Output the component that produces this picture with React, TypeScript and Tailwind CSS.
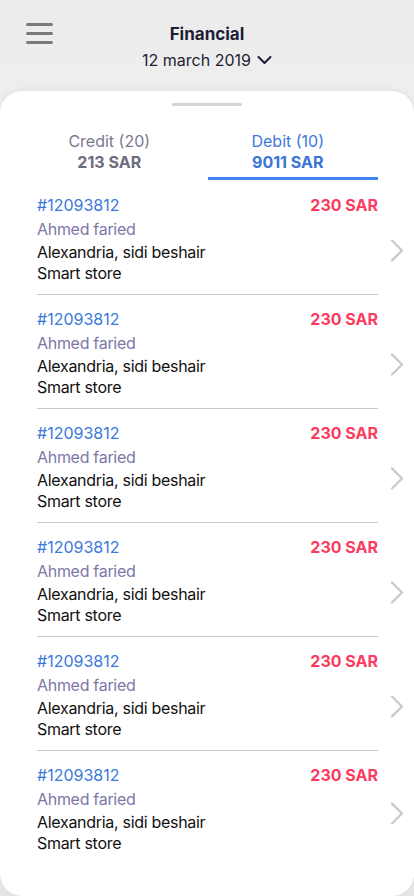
import React from "react";

const items = Array.from({ length: 6 }, (_, i) => ({
  id: i,
  code: "#12093812",
  amount: "230 SAR",
  name: "Ahmed faried",
  address: "Alexandria, sidi beshair",
  store: "Smart store",
}));

const App: React.FC = () => {
  return (
    <div
      className="flex flex-col h-[896px] w-full overflow-hidden bg-gradient-to-b from-[#ececec] via-[#f6f6f6] to-[#e6e6e6]"
      style={{ fontFamily: "Inter, 'Noto Sans', sans-serif" }}
    >
      {/* header */}
      <div className="flex h-[91px] shrink-0 items-start justify-between">
        <div className="w-[80px] pl-[26px] pt-[23px]">
          <div className="flex w-[27px] flex-col gap-[6px]">
            <span className="h-[3px] w-full rounded-full bg-[#7a7a7a]" />
            <span className="h-[3px] w-full rounded-full bg-[#7a7a7a]" />
            <span className="h-[3px] w-full rounded-full bg-[#7a7a7a]" />
          </div>
        </div>
        <div className="flex flex-col items-center pt-[24px]">
          <h1 className="text-[17px] leading-[20px] font-bold text-[#1d1d35]">Financial</h1>
          <div className="mt-[5px] flex items-center gap-[6px] text-[16px] leading-[22px] text-[#1d1d35]">
            <span>12 march 2019</span>
            <svg width="15" height="10" viewBox="0 0 15 10" fill="none">
              <path d="M1.5 2 L7.5 8 L13.5 2" stroke="#1d1d35" strokeWidth="2" strokeLinecap="round" strokeLinejoin="round" />
            </svg>
          </div>
        </div>
        <div className="w-[80px]" />
      </div>

      {/* card */}
      <div className="flex-1 rounded-[22px] bg-white shadow-[0_-1px_6px_rgba(0,0,0,0.06)] pt-3">
        <div className="mx-auto h-[3px] w-[70px] rounded-full bg-[#d4d4d4]" />

        <div className="ml-[37px] mt-[25px] grid w-[341px] grid-cols-2">
          <div className="pr-[26px] text-center">
            <div className="text-[16px] leading-[20px] text-[#7a7a8e]">Credit (20)</div>
            <div className="mt-[1px] text-[16px] leading-[20px] font-bold text-[#6c6c7c]">213 SAR</div>
          </div>
          <div className="flex flex-col items-center">
            <div className="pr-[10px] text-[16px] leading-[20px] text-[#3b78dc]">Debit (10)</div>
            <div className="mt-[1px] pr-[10px] text-[16px] leading-[20px] font-bold text-[#3a74d6]">9011 SAR</div>
            <div className="mt-[5px] h-[3px] w-full bg-[#3f84f4]" />
          </div>
        </div>

        <div className="pt-[13px]">
          {items.map((it, idx) => (
            <div key={it.id} className="flex">
              <div className="ml-[37px] w-[341px]">
                <div className="pb-[11px]">
                  <div className="flex items-center justify-between leading-[24px]">
                    <span className="text-[16px] text-[#3b78dc]">{it.code}</span>
                    <span className="text-[16px] font-bold text-[#fb3b60]">{it.amount}</span>
                  </div>
                  <div className="text-[16px] leading-[24px] tracking-[-0.3px] text-[#7d77a9]">{it.name}</div>
                  <div className="text-[16px] leading-[22px] tracking-[-0.3px] text-[#111]">{it.address}</div>
                  <div className="text-[16px] leading-[20px] tracking-[-0.3px] text-[#111]">{it.store}</div>
                </div>
                {idx < items.length - 1 && <div className="h-px w-full bg-[#c8c6d0]" />}
                {idx < items.length - 1 && <div className="h-3" />}
              </div>
              <div className="flex flex-1 items-center justify-center pl-[2px]">
                <svg width="14" height="23" viewBox="0 0 14 23" fill="none">
                  <path d="M2 1.5 L12 11.5 L2 21.5" stroke="#c7c7cc" strokeWidth="2.2" strokeLinecap="round" strokeLinejoin="round" />
                </svg>
              </div>
            </div>
          ))}
        </div>
      </div>
    </div>
  );
};

export default App;
